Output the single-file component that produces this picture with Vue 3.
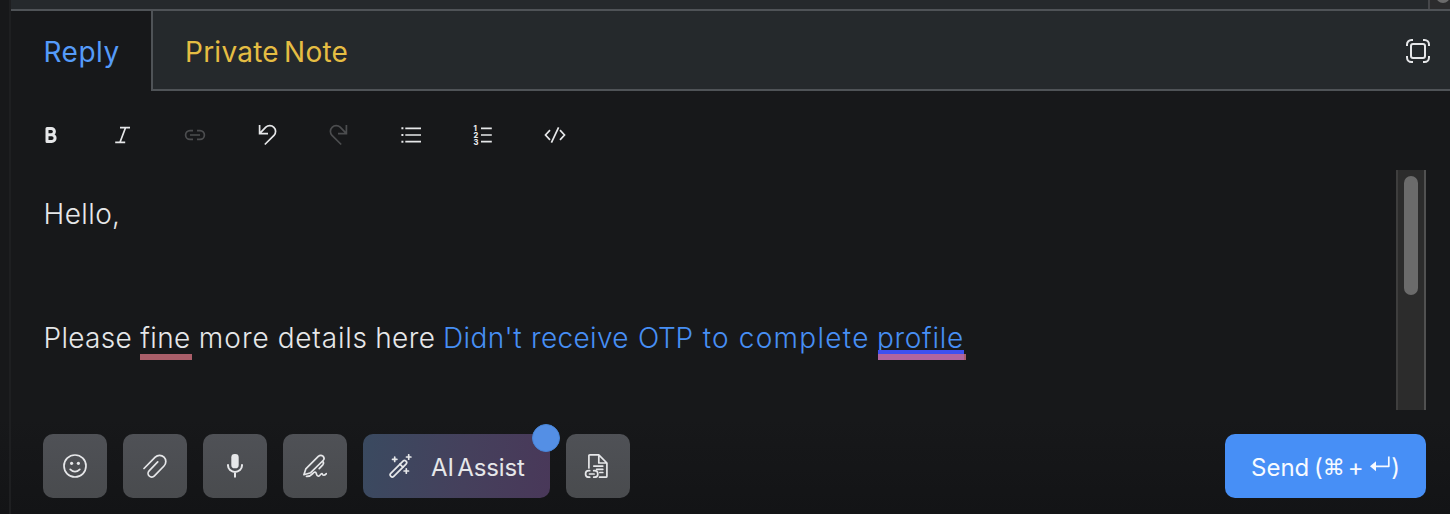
<script setup>
const tools = ['bold', 'italic', 'link', 'undo', 'redo', 'bullets', 'numbers', 'code']
const actions = ['emoji', 'attach', 'mic', 'sign']

// Each word: text, advance to the next word, tracking
const plain = [
  { t: 'Please', w: 96.7, s: 0.3 },
  { t: 'fine', w: 58.5, s: 0.4, mark: 'typo' },
  { t: 'more', w: 79, s: 1.1 },
  { t: 'details', w: 97.5, s: 0.8 },
  { t: 'here', w: 67.8, s: 0.4 },
]
const anchor = [
  { t: "Didn't", w: 88, s: 0.4 },
  { t: 'receive', w: 107, s: 0.35 },
  { t: 'OTP', w: 64.7, s: -0.3 },
  { t: 'to', w: 36, s: 1.1 },
  { t: 'complete', w: 138.3, s: 1.3 },
  { t: 'profile', w: 90, s: 0.7, mark: 'marked' },
]
const fit = (word) => ({ width: word.w + 'px', letterSpacing: word.s + 'px' })
</script>

<template>
  <div class="page">
    <div class="gutter"></div>
    <section class="composer">
      <div class="thread-edge">
        <div class="thread-track"><i></i></div>
      </div>

      <header class="tabs">
        <button class="tab reply"><span>Reply</span></button>
        <div class="rest">
          <button class="tab note"><span>Private Note</span></button>
          <svg class="expand" viewBox="0 0 24 24">
            <rect x="5" y="5" width="14" height="14" rx="2" />
            <path d="M1 7V5.5A4.5 4.5 0 0 1 5.500 1H7M17 1h1.500A4.500 4.500 0 0 1 23 5.500V7M23 17v1.500a4.500 4.500 0 0 1-4.500 4.500H17M7 23H5.500A4.500 4.500 0 0 1 1 18.500V17" />
          </svg>
        </div>
      </header>

      <nav class="toolbar">
        <svg v-for="t in tools" :key="t" viewBox="0 0 24 24" :class="{ dim: t === 'link' || t === 'redo' }">
          <path v-if="t === 'bold'" stroke-width="3" stroke-linejoin="round" d="M8 5.500h4.300a2.900 2.900 0 0 1 0 6.200H8zM8 11.700h4.700a3.300 3.300 0 0 1 0 6.800H8z" />
          <path v-else-if="t === 'italic'" d="M9 4.700h10M4.200 19.300h10M14.500 4.700L9 19.300" />
          <path v-else-if="t === 'link'" d="M10 7.600H7a4.400 4.400 0 0 0 0 8.800h3M14 7.600h3a4.400 4.400 0 0 1 0 8.800h-3M7 12h10" />
          <path v-else-if="t === 'undo'" d="M4.600 2v8.600H13M4.800 10.400L10.800 4.200a5.800 5.800 0 0 1 8.200 8.200L9.800 21.500" />
          <path v-else-if="t === 'redo'" d="M19.400 2v8.600H11M19.200 10.400L13.200 4.200a5.800 5.800 0 0 0-8.200 8.200L14.200 21.500" />
          <g v-else-if="t === 'bullets'">
            <path d="M6.300 5.300H22M6.300 12H22M6.300 18.700H22" />
            <path stroke-width="2" d="M2.400 5.300h2M2.400 12h2M2.400 18.700h2" />
          </g>
          <g v-else-if="t === 'numbers'">
            <path d="M10 5.300H20.800M10 12H20.800M10 18.700H20.800" />
            <text x="2.600" y="7.700">1</text>
            <text x="2.600" y="14.700">2</text>
            <text x="2.600" y="21.700">3</text>
          </g>
          <path v-else d="M7 7.200L2.500 12L7 16.800M17 7.200L21.500 12L17 16.800M15.600 4.300L8.400 19.700" />
        </svg>
      </nav>

      <div class="editor">
        <div class="text">
          <p class="hello">Hello,</p>
          <p></p>
          <p class="line">
            <span v-for="word in plain" :key="word.t" :class="['w', word.mark]" :style="fit(word)">{{ word.t + ' ' }}</span>
            <a class="anchor"><span v-for="word in anchor" :key="word.t" :class="['w', word.mark]" :style="fit(word)">{{ word.t + ' ' }}</span></a>
          </p>
        </div>
        <div class="scroll"><i></i></div>
      </div>

      <footer class="actions">
        <button v-for="a in actions" :key="a" class="square">
          <svg viewBox="0 0 24 24">
            <g v-if="a === 'emoji'">
              <circle cx="12" cy="12" r="11" />
              <path d="M7.200 15.300q4.800 4.800 9.600 0" />
              <circle class="fill" cx="8.600" cy="9.300" r="1.600" />
              <circle class="fill" cx="15.400" cy="9.300" r="1.600" />
            </g>
            <path v-else-if="a === 'attach'" d="M1 14.500L12.200 3.200A6.200 6.200 0 0 1 21 12L11.400 21.900A3.600 3.600 0 0 1 6.100 16.800L14.700 7.900" />
            <g v-else-if="a === 'mic'">
              <rect class="fill" x="8.300" y="0" width="7.400" height="14.300" rx="3.400" />
              <path stroke-width="2" d="M5 11v.600a7 6.300 0 0 0 14 0V11M12 18v4.800" />
            </g>
            <path v-else d="M.900 20.700L2.800 14.900L15.300 2.400Q17.600.300 20 2.100Q22.100 4.500 20.100 6.500L7.700 18.700ZM19.600 7.200Q21.300 8.900 19.800 10.800L16.200 14.600M3.500 22.400C9 22.600 9 19.200 11.300 18.300C14.300 17 12.600 22.600 15.400 22.200C17.400 22 17.500 19.200 19 19.500C19.800 21.900 21.400 21.700 23.400 19.600" />
          </svg>
        </button>

        <button class="assist">
          <svg viewBox="0 0 24 24">
            <rect x="-.300" y="12.600" width="21.400" height="4.200" rx="2" transform="rotate(-45 10.400 14.700)" />
            <path d="M11.900 10.200l3 3" />
            <path d="M6.700 3.100v4.400M4.500 5.300h4.400M20.700.800v4.400M18.500 3h4.400M18.300 14.800v4.400M16.100 17h4.400" />
          </svg>
          <span>AI Assist</span>
          <i class="badge"></i>
        </button>

        <button class="square">
          <svg class="doc" viewBox="0 0 24 24">
            <path d="M4.900 14V1.800Q4.900.900 5.800.900H14.800L22.900 9V22.200Q22.900 23.200 21.900 23.200H15.500M14.800.900V9h8.100M9.800 12.100h9M12.600 15.300h6.200M15.800 18.500h3" />
            <path d="M5.700 16.700H4.800a3.200 3.200 0 0 0 0 6.500h.900M9.700 16.700h.900a3.200 3.200 0 0 1 0 6.500h-.900M5.500 20h4.600" />
          </svg>
        </button>

        <button class="send">
          <span class="label">Send (</span><span class="cmd">⌘</span><span class="plus">+</span>
          <svg viewBox="0 0 20 16"><path d="M18.800.500V10.300H5" /><path class="fill" d="M0 10.300L6 5.300V15.300Z" /></svg>
          <span class="close">)</span>
        </button>
      </footer>
    </section>
  </div>
</template>

<style>
body { margin: 0; background: #17181a; overflow: hidden; }
</style>

<style scoped>
* { box-sizing: border-box; }
.page { display: flex; width: 1450px; height: 514px; overflow: hidden; background: linear-gradient(#17181a 0, #17181a 420px, #131416 514px); font-family: Inter, "Liberation Sans", sans-serif; color: #e6e7e9; }
.gutter { width: 11px; border-right: 2px solid #1e1f21; }
.composer { width: 1439px; display: flex; flex-direction: column; }
button { border: 0; margin: 0; padding: 0; background: none; font: inherit; color: inherit; }
svg { fill: none; stroke: #e6e7e9; stroke-width: 1.700; flex: none; display: block; stroke-linecap: round; stroke-linejoin: round; }
.fill { fill: #e6e7e9; stroke: none; }

.thread-edge { height: 11px; background: #25292c; border-bottom: 2px solid #4f5357; display: flex; justify-content: flex-end; overflow: hidden; }
.thread-track { width: 22px; height: 9px; background: #2c2c2d; border-left: 2px solid #45474a; padding-left: 6px; overflow: hidden; }
.thread-track i { display: block; width: 14px; height: 14px; margin-top: -11px; border-radius: 7px; background: #6b6b6b; }

.tabs { display: flex; height: 80px; font-size: 28px; }
.tab { line-height: 40px; white-space: nowrap; text-align: left; }
.reply { width: 140px; padding: 2px 0 0 32.500px; color: #559bf9; letter-spacing: .5px; }
.rest { flex: 1; display: flex; justify-content: space-between; align-items: center; background: #25292c; border-left: 2px solid #4f5357; border-bottom: 2px solid #4f5357; padding: 0 20px 0 32px; }
.note { color: #e5bd43; letter-spacing: .250px; word-spacing: -3px; padding-top: 4px; }
.expand { width: 24px; height: 24px; stroke-width: 2; margin-top: 1px; stroke-linecap: butt; }

.toolbar { display: flex; gap: 48px; padding: 32px 0 0 28px; height: 79px; }
.toolbar svg { width: 24px; height: 24px; stroke-linecap: butt; stroke-linejoin: miter; stroke-width: 1.700; }
.toolbar .dim { stroke: #4c4d4f; }
.toolbar text { font-size: 7.500px; font-weight: 800; fill: #e6e7e9; stroke: none; }

.editor { display: flex; justify-content: space-between; height: 240px; padding: 0 24px 0 32.500px; }
.text { font-size: 28px; font-weight: 350; line-height: 62px; padding-top: 13px; white-space: nowrap; }
.text p { margin: 0; height: 62px; }
.hello { letter-spacing: .400px; }
.line, .anchor { display: flex; }
.w { flex: none; position: relative; height: 62px; }
.anchor { color: #478ff5; }
.typo::after { content: ""; position: absolute; left: 0; width: 52px; top: 47px; height: 6px; background: #aa5e69; }
.marked::before { content: ""; position: absolute; left: 1px; width: 86px; top: 43px; height: 10px; background: #3e50f0; }
.marked::after { content: ""; position: absolute; left: 1.500px; width: 86px; top: 47px; height: 6px; background: #b065a0; border-right: 2px solid #aa5e69; }
.scroll { width: 30px; height: 240px; background: #2c2c2c; border-left: 2px solid #3e3e3e; border-right: 2px solid #515151; padding: 6px; }
.scroll i { display: block; width: 14px; height: 119px; border-radius: 7px; background: #6b6b6b; }

.actions { display: flex; gap: 16px; padding: 24px 24px 0 32px; }
.actions button { height: 64px; border-radius: 10px; display: flex; align-items: center; }
.actions svg { width: 24px; height: 24px; }
.square { width: 64px; justify-content: center; background: linear-gradient(#4f5156, #494b4e); }
.actions .doc { margin-right: 4px; }
.assist { position: relative; width: 187px; background: linear-gradient(100deg, #3a4a60, #45405c 55%, #493859); font-size: 24px; }
.actions .assist { padding-left: 25px; }
.assist span { margin-left: 19px; padding-top: 2px; letter-spacing: -.150px; word-spacing: -3px; }
.badge { position: absolute; right: -10px; top: -10px; width: 28px; height: 28px; border-radius: 50%; background: #548fe5; border: 1.500px solid #4885d8; }
.send { width: 201px; margin-left: auto; background: #478ff6; color: #f7faff; font-size: 24px; white-space: nowrap; }
.actions .send { padding: 2px 0 0 26px; }
.label { letter-spacing: 0; word-spacing: -2px; }
.actions .send svg { width: 20px; height: 16px; margin: -7px 0 0 6px; stroke: #f7faff; stroke-linecap: butt; }
.send .fill { fill: #f7faff; }
.cmd { font-family: "DejaVu Sans", sans-serif; font-size: 22px; width: 20px; }
.plus { margin-left: 5px; }
.close { margin-left: 1.500px; }
</style>
